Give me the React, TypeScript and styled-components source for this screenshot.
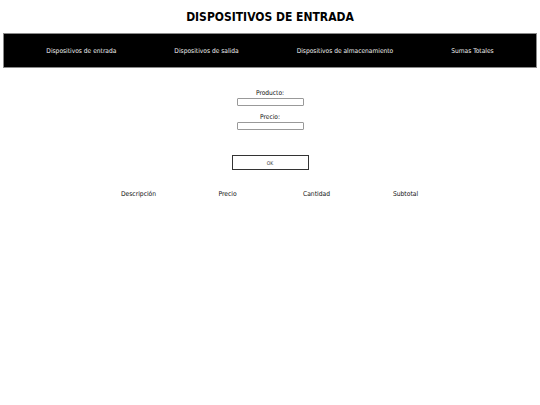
import React from 'react';
import styled, { createGlobalStyle } from 'styled-components';

const GlobalStyle = createGlobalStyle`
  body {
    margin: 0;
    background: #fff;
    font-family: "DejaVu Sans Condensed", "DejaVu Sans", sans-serif;
    color: #000;
  }
`;

const Title = styled.h1`
  margin: 0;
  padding-top: 8px;
  height: 33px;
  box-sizing: border-box;
  text-align: center;
  font-size: 12px;
  font-weight: bold;
  line-height: 18px;
`;

const Nav = styled.nav`
  margin: 0 3px;
  height: 35px;
  box-sizing: border-box;
  background: #000;
  border: 1px solid #8a8a8a;
  display: flex;
  justify-content: center;
  align-items: center;
  gap: 58px;
`;

const NavLink = styled.a`
  color: #eee;
  font-size: 6.6px;
  text-decoration: none;
`;

const Form = styled.form`
  display: flex;
  flex-direction: column;
  align-items: center;
  margin-top: 21px;
`;

const Label = styled.label`
  font-size: 6.6px;
  line-height: 9px;
  color: #111;
`;

const Input = styled.input`
  width: 67px;
  height: 8px;
  box-sizing: border-box;
  margin: 0 0 7px;
  padding: 0;
  border: 1px solid #999;
  border-radius: 1px;
  background: #fff;
`;

const Button = styled.button`
  margin-top: 18px;
  width: 77px;
  height: 15px;
  box-sizing: border-box;
  padding: 0;
  border: 1px solid #333;
  background: #fff;
  font-family: inherit;
  font-size: 5px;
  color: #333;
`;

const Table = styled.table`
  margin: 19px 0 0 94px;
  border-collapse: collapse;
`;

const Th = styled.th`
  width: 89px;
  padding: 0;
  font-size: 6.7px;
  line-height: 10px;
  font-weight: normal;
  color: #111;
  text-align: center;
`;

const links = [
  'Dispositivos de entrada',
  'Dispositivos de salida',
  'Dispositivos de almacenamiento',
  'Sumas Totales',
];

const columns = ['Descripción', 'Precio', 'Cantidad', 'Subtotal'];

export default function App() {
  return (
    <>
      <GlobalStyle />
      <Title>DISPOSITIVOS DE ENTRADA</Title>
      <Nav>
        {links.map((l) => (
          <NavLink key={l} href="#">{l}</NavLink>
        ))}
      </Nav>
      <Form onSubmit={(e) => e.preventDefault()}>
        <Label htmlFor="producto">Producto:</Label>
        <Input id="producto" type="text" />
        <Label htmlFor="precio">Precio:</Label>
        <Input id="precio" type="text" />
        <Button type="submit">OK</Button>
      </Form>
      <Table>
        <thead>
          <tr>
            {columns.map((c) => (
              <Th key={c}>{c}</Th>
            ))}
          </tr>
        </thead>
      </Table>
    </>
  );
}
